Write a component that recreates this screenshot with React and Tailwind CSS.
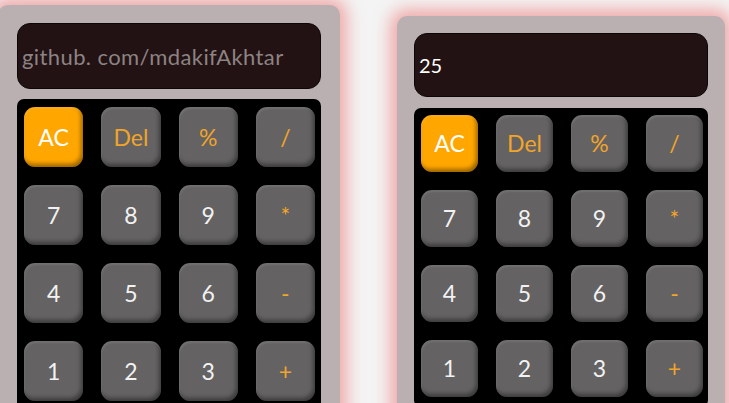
import React from 'react';

const KEYS = [
  { k: 'AC', type: 'clear' },
  { k: 'Del', type: 'op' },
  { k: '%', type: 'op' },
  { k: '/', type: 'op' },
  { k: '7' }, { k: '8' }, { k: '9' }, { k: '*', type: 'op' },
  { k: '4' }, { k: '5' }, { k: '6' }, { k: '-', type: 'op' },
  { k: '1' }, { k: '2' }, { k: '3' }, { k: '+', type: 'op' },
];

const Key = ({ k, type, size }) => {
  const base = type === 'clear'
    ? 'bg-[#ffa600] text-white'
    : type === 'op'
      ? 'bg-[#646262] text-[#f0a52a]'
      : 'bg-[#646262] text-[#f2f2f2]';
  return (
    <button
      className={`${base} ${size} rounded-[11px] flex items-center justify-center text-[23px] leading-none shadow-[inset_1px_2px_2px_rgba(255,255,255,0.1),inset_-2px_-3px_4px_rgba(0,0,0,0.4)]`}
      style={{ fontFamily: 'Lato, "Noto Sans", sans-serif' }}
    >
      {k}
    </button>
  );
};

const Calculator = ({ value, muted, className, displayH, keySize, pad, gapTop, keysPad }) => (
  <div className={`bg-[#bbb0b1] rounded-[10px] shadow-[0_0_16px_7px_rgba(238,140,140,0.7)] shrink-0 ${className}`}>
    <div className={`${pad}`}>
      <div className={`${displayH} bg-[#221213] border border-[#0c0606] rounded-[13px] flex items-center pl-[4px]`}>
        <span
          className={muted ? 'text-[22px] text-[#8d8383] tracking-[0.4px]' : 'text-[20px] text-white'}
          style={{ fontFamily: 'Lato, "Noto Sans", sans-serif' }}
        >
          {value}
        </span>
      </div>
      <div className={`${gapTop} bg-black rounded-[7px] ${keysPad} grid grid-cols-4 gap-[18px]`}>
        {KEYS.map((key) => <Key key={key.k} {...key} size={keySize} />)}
      </div>
    </div>
  </div>
);

export default function App() {
  return (
    <div className="w-[729px] h-[403px] overflow-hidden bg-[#f4f4f4] flex items-start">
      <Calculator
        value="github. com/mdakifAkhtar"
        muted
        className="ml-[-2px] mt-[5px] w-[342px] h-[460px]"
        pad="px-[19px] pt-[18px]"
        displayH="h-[66px]"
        gapTop="mt-[10px]"
        keysPad="pl-[7px] pr-[6px] pt-[8px] pb-[10px]"
        keySize="h-[60px]"
      />
      <Calculator
        value="25"
        className="ml-[57px] mt-[16px] w-[328px] h-[460px]"
        pad="pl-[17px] pr-[17px] pt-[17px]"
        displayH="h-[64px]"
        gapTop="mt-[11px]"
        keysPad="pl-[7px] pr-[5px] pt-[7px] pb-[10px]"
        keySize="h-[57px]"
      />
    </div>
  );
}
